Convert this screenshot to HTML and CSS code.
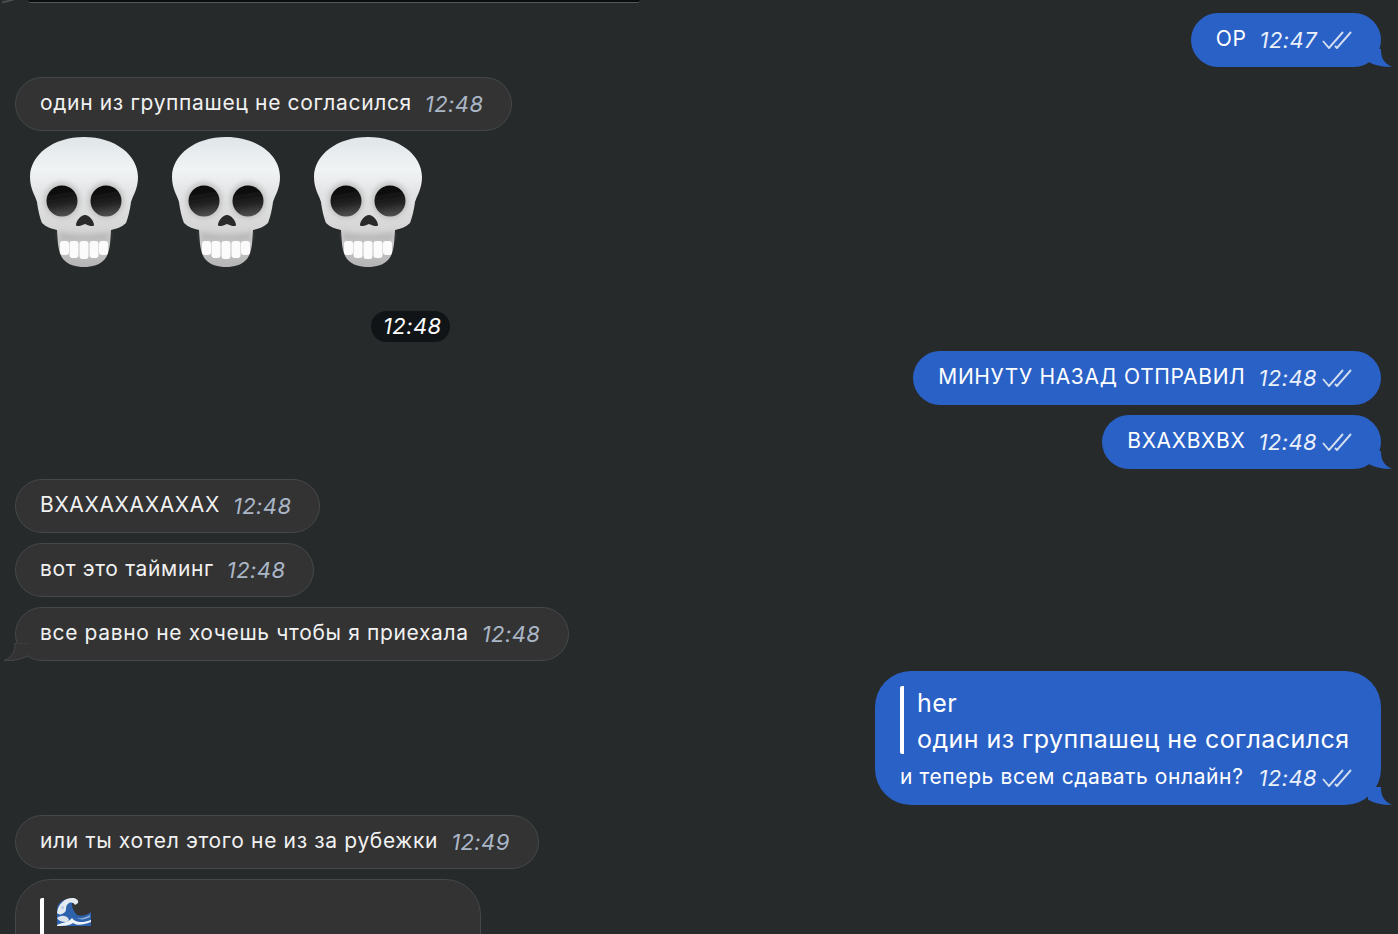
FILE: index.html
```html
<!DOCTYPE html>
<html lang="en">

<head>
  <meta charset="UTF-8">
  <meta name="viewport" content="width=device-width, initial-scale=1.0">
  <title>Chat</title>
  <link rel="stylesheet" href="styles.css">
</head>

<body>
  <svg class="defs" width="0" height="0">
    <defs>
      <linearGradient id="bone" x1="0" y1="0" x2="0" y2="1">
        <stop offset="0" stop-color="#dfe5e8" />
        <stop offset="0.25" stop-color="#f1f4f5" />
        <stop offset="0.42" stop-color="#e4e5e6" />
        <stop offset="0.7" stop-color="#d6d6d6" />
        <stop offset="1" stop-color="#b4b4b4" />
      </linearGradient>
      <linearGradient id="socket" x1="0.35" y1="0" x2="0.5" y2="1">
        <stop offset="0" stop-color="#040404" />
        <stop offset="0.6" stop-color="#222" />
        <stop offset="1" stop-color="#505050" />
      </linearGradient>
      <filter id="soft" x="-20%" y="-20%" width="140%" height="140%">
        <feGaussianBlur stdDeviation="0.5" />
      </filter>
      <filter id="teeth" x="-20%" y="-20%" width="140%" height="140%">
        <feGaussianBlur stdDeviation="0.6" />
      </filter>
      <filter id="softer" x="-30%" y="-30%" width="160%" height="160%">
        <feGaussianBlur stdDeviation="2.5" />
      </filter>
      <symbol id="skull" viewBox="0 0 108 130">
        <path fill="url(#bone)" d="M54 0C85 0 108 18 108 40C108 52 103 58 101 65C100 73 98 81 96 86C92 90 86 92 81 93L80 107C79 114 78 118 75 122C70 128 62 130 54 130C46 130 38 128 33 122C30 118 29 114 28 107L27 93C22 92 16 90 12 86C10 81 8 73 7 65C5 58 0 52 0 40C0 18 23 0 54 0Z" />
        <g filter="url(#softer)" fill="#a8a8a8" opacity="0.55">
          <ellipse cx="32" cy="63" rx="18" ry="18" />
          <ellipse cx="76" cy="63" rx="18" ry="18" />
          <path d="M28 94C40 99 68 99 80 94L78 104L30 104Z" />
        </g>
        <g filter="url(#soft)">
          <ellipse cx="32" cy="64" rx="15.5" ry="15.5" fill="url(#socket)" />
          <ellipse cx="76" cy="64" rx="15.5" ry="15.5" fill="url(#socket)" />
          <path fill="#2a2a2a" d="M55 78C59 78 64 84 64 88C64 90 59 89 55 87C51 89 46 90 46 88C46 84 51 78 55 78Z" />
        </g>
        <g fill="#fbfbfb" filter="url(#teeth)">
          <rect x="30" y="104" width="9" height="14" rx="3" />
          <rect x="39.5" y="104" width="9" height="17" rx="3" />
          <rect x="49.5" y="104" width="9" height="18" rx="3" />
          <rect x="59.5" y="104" width="9" height="17" rx="3" />
          <rect x="69" y="104" width="9" height="14" rx="3" />
        </g>
      </symbol>
      <symbol id="checks" viewBox="0 0 30 18">
        <path fill="none" stroke="currentColor" stroke-width="1.9" d="M1 10L7 17L21 1M13 15L15 17L29 1" />
      </symbol>
    </defs>
  </svg>

  <div class="chat">
    <div class="prev-msg"></div>

    <div class="row out">
      <div class="bubble out-b has-tail">
        <span class="txt">OP</span>
        <span class="meta"><span class="time">12:47</span><svg class="ticks"><use href="#checks" /></svg></span>
        <svg class="tail tail-r" viewBox="0 0 24 18"><path d="M0 0L13 0C13 8 15 14 24 17.8C16 18 8 17 0 12.7Z" /></svg>
      </div>
    </div>

    <div class="row">
      <div class="bubble in-b">
        <span class="txt">один из группашец не согласился</span>
        <span class="meta"><span class="time">12:48</span></span>
      </div>
    </div>

    <div class="row skulls">
      <svg class="skull"><use href="#skull" /></svg>
      <svg class="skull"><use href="#skull" /></svg>
      <svg class="skull"><use href="#skull" /></svg>
    </div>
    <div class="row time-row">
      <span class="time-pill">12:48</span>
    </div>

    <div class="row out">
      <div class="bubble out-b">
        <span class="txt">МИНУТУ НАЗАД ОТПРАВИЛ</span>
        <span class="meta"><span class="time">12:48</span><svg class="ticks"><use href="#checks" /></svg></span>
      </div>
    </div>
    <div class="row out">
      <div class="bubble out-b has-tail">
        <span class="txt">ВХАХВХВХ</span>
        <span class="meta"><span class="time">12:48</span><svg class="ticks"><use href="#checks" /></svg></span>
        <svg class="tail tail-r" viewBox="0 0 24 18"><path d="M0 0L13 0C13 8 15 14 24 17.8C16 18 8 17 0 12.7Z" /></svg>
      </div>
    </div>

    <div class="row">
      <div class="bubble in-b">
        <span class="txt">ВХАХАХАХАХАХ</span>
        <span class="meta"><span class="time">12:48</span></span>
      </div>
    </div>
    <div class="row">
      <div class="bubble in-b">
        <span class="txt">вот это тайминг</span>
        <span class="meta"><span class="time">12:48</span></span>
      </div>
    </div>
    <div class="row">
      <div class="bubble in-b has-tail">
        <span class="txt">все равно не хочешь чтобы я приехала</span>
        <span class="meta"><span class="time">12:48</span></span>
        <svg class="tail tail-l" viewBox="0 0 24 18"><path d="M24 0L11 0C11 8 9 14 0 17.5C8 18 16 17 24 12.5" /></svg>
      </div>
    </div>

    <div class="row out">
      <div class="bubble out-b reply-b has-tail">
        <div class="quote">
          <div class="quote-name">her</div>
          <div class="quote-text">один из группашец не согласился</div>
        </div>
        <div class="reply-line">
          <span class="txt">и теперь всем сдавать онлайн?</span>
          <span class="meta"><span class="time">12:48</span><svg class="ticks"><use href="#checks" /></svg></span>
        </div>
        <svg class="tail tail-r" viewBox="0 0 24 18"><path d="M0 0L13 0C13 8 15 14 24 17.8C16 18 8 17 0 12.7Z" /></svg>
      </div>
    </div>

    <div class="row">
      <div class="bubble in-b">
        <span class="txt">или ты хотел этого не из за рубежки</span>
        <span class="meta"><span class="time">12:49</span></span>
      </div>
    </div>
    <div class="row last-row">
      <div class="bubble in-b last-b">
        <div class="quote quote-in">
          <svg class="wave" viewBox="0 0 34 28">
            <path fill="#2f62ad" d="M0 28V10C2 3 9 0 16 1C14 5 15 12 20 17C25 19 30 17 34 14V28Z" />
            <path fill="#e4ebf1" d="M0 15C1 6 8 0 15 0C19 0 22 2 21 5L18 7C16 4 13 4 11 6C8 8 10 12 8 14C5 17 2 17 0 15Z" />
            <path fill="#dbe4ed" d="M0 20C4 17 8 17 11 20C13 22 11 24 8 24C5 24 2 23 0 20Z" />
            <path fill="#eef3f7" d="M0 27C6 24 11 25 15 20C18 25 26 25 34 22V24C26 27 20 28 16 25C12 28 5 28 0 28Z" />
            <path fill="#8fb0d6" d="M19 20C23 21 28 20 33 17V19C28 22 23 22 19 20Z" />
            <path fill="#b9cbe0" d="M4 9C6 7 7 8 7 10C6 12 4 12 4 9Z" />
          </svg>
        </div>
      </div>
    </div>
  </div>
</body>

</html>
```

FILE: styles.css
```css
* {
  margin: 0;
  padding: 0;
  box-sizing: border-box;
}

html,
body {
  height: 100%;
  overflow: hidden;
}

body {
  background: #262a2b;
  font-family: "Inter", "Noto Sans", sans-serif;
  color: #fff;
}

.defs {
  position: absolute;
}

.chat {
  display: flex;
  flex-direction: column;
  gap: 10px;
  height: 100%;
  overflow: hidden;
  padding: 0 17px 0 15px;
}

.chat > * {
  flex-shrink: 0;
}

.prev-msg {
  position: relative;
  height: 3px;
  margin: 0 0 0 13px;
  width: 612px;
  background: #0b0c0d;
  border-bottom: 1px solid #55585c;
  border-radius: 0 0 12px 12px;
}

/* bit of the tail of the message above */
.prev-msg::before {
  content: "";
  position: absolute;
  left: -26px;
  top: 0;
  width: 12px;
  height: 2px;
  background: #4a4d50;
  transform: rotate(-14deg);
}

.row {
  display: flex;
}

.row.out {
  justify-content: flex-end;
}

.bubble {
  position: relative;
  display: flex;
  align-items: center;
  height: 54px;
  padding: 0 29px 0 25px;
  border-radius: 27px;
  font-size: 21px;
  letter-spacing: 0.65px;
  white-space: nowrap;
}

.in-b {
  background: #333;
  border: 1px solid #45484a;
  padding-left: 24px;
  padding-right: 28px;
}

.in-b .txt {
  color: #f1f1f1;
}

.out-b {
  background: #2a61c6;
}

.txt {
  margin-top: -3px;
}

.meta {
  display: inline-flex;
  align-items: center;
  margin-left: 13px;
}

.time {
  font-style: italic;
  font-size: 22px;
  letter-spacing: 0.4px;
  color: #aab6c6;
}

.out-b .time {
  color: #e9f0fa;
}

.ticks {
  width: 30px;
  height: 18px;
  margin-left: 5px;
  color: #d3def0;
}

.tail {
  position: absolute;
  bottom: 0;
  width: 24px;
  height: 18px;
}

.tail-r {
  right: -11px;
  fill: #2a61c6;
}

.tail-l {
  left: -12px;
  bottom: -1px;
  fill: #333;
  stroke: #45484a;
  stroke-width: 1;
}

.skulls {
  gap: 34px;
  height: 130px;
  padding-left: 15px;
  margin-top: -4px;
}

.skull {
  width: 108px;
  height: 130px;
}

.time-row {
  padding-left: 356px;
  margin-top: 34px;
  margin-bottom: -1px;
}

.time-pill {
  display: block;
  height: 31px;
  padding: 0 8px 0 12px;
  line-height: 31px;
  border-radius: 16px;
  background: #101416;
  font-style: italic;
  font-size: 22px;
  letter-spacing: 0.4px;
}

.reply-b {
  display: block;
  height: 134px;
  padding: 15px 29px 0 25px;
  border-radius: 36px;
}

.quote {
  border-left: 4px solid #fff;
  border-radius: 2px;
  padding-left: 13px;
  height: 68px;
}

.quote-name,
.quote-text {
  font-size: 25px;
  letter-spacing: 0.45px;
}

.quote-name {
  line-height: 34px;
}

.quote-text {
  margin-top: 3px;
  line-height: 33px;
}

.reply-line {
  display: flex;
  align-items: center;
  margin-top: 11px;
  letter-spacing: 0.6px;
}

.reply-line .meta {
  margin-left: 15px;
}

.last-b {
  display: block;
  height: 140px;
  width: 466px;
  padding: 14px 28px 0 24px;
  border-radius: 36px;
}

.quote-in {
  height: 120px;
}

.wave {
  display: block;
  width: 34px;
  height: 28px;
  margin-top: 4px;
}
```
